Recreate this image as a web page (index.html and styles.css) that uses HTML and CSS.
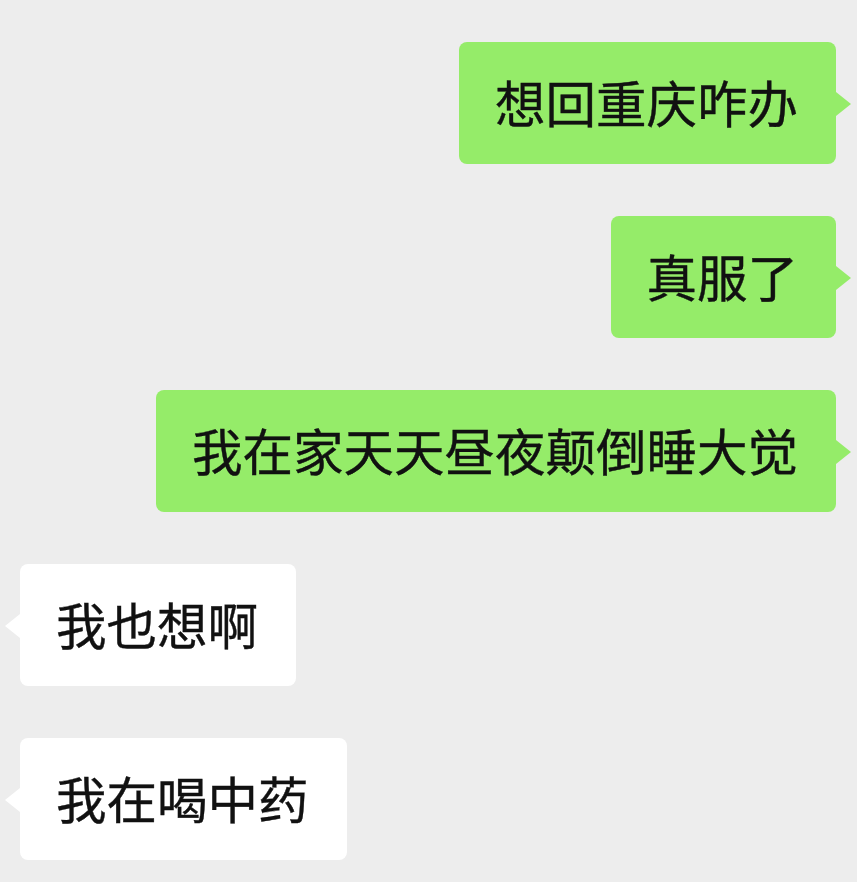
FILE: index.html
```html
<!DOCTYPE html>
<html lang="zh-CN">
<head>
    <meta charset="UTF-8">
    <meta name="viewport" content="width=device-width, initial-scale=1.0">
    <title>聊天记录</title>
    <link rel="stylesheet" href="styles.css">
</head>
<body>

    <div class="chat">
        <div class="msg mine"><div class="bubble">想回重庆咋办</div></div>
        <div class="msg mine"><div class="bubble">真服了</div></div>
        <div class="msg mine"><div class="bubble">我在家天天昼夜颠倒睡大觉</div></div>
        <div class="msg theirs"><div class="bubble">我也想啊</div></div>
        <div class="msg theirs"><div class="bubble">我在喝中药</div></div>
    </div>

</body>
</html>
```

FILE: styles.css
```css
body {
    font-family: "Noto Sans CJK SC", "Noto Sans", sans-serif;
    background-color: #ededed;
    margin: 0;
    height: 882px;
    overflow: hidden;
}

.chat {
    display: flex;
    flex-direction: column;
    gap: 52px;
    padding: 42px 21px 0 20px;
}

.msg {
    display: flex;
}

.msg.mine {
    justify-content: flex-end;
}

.msg.theirs {
    justify-content: flex-start;
}

.bubble {
    position: relative;
    font-size: 50.5px;
    line-height: 52px;
    padding: 33px 38px 37px 36px;
    border-radius: 8px;
    color: #111111;
    white-space: nowrap;
    -webkit-text-stroke: 0.4px #111111;
}

.mine .bubble {
    background-color: #95ec69;
}

.theirs .bubble {
    background-color: #ffffff;
}

/* little tails */
.bubble::after {
    content: "";
    position: absolute;
    top: 50%;
    width: 0;
    height: 0;
    margin-top: -11px;
    border-top: 12px solid transparent;
    border-bottom: 12px solid transparent;
}

.mine .bubble::after {
    right: -15px;
    border-left: 15px solid #95ec69;
}

.theirs .bubble::after {
    left: -15px;
    border-right: 15px solid #ffffff;
}
```
